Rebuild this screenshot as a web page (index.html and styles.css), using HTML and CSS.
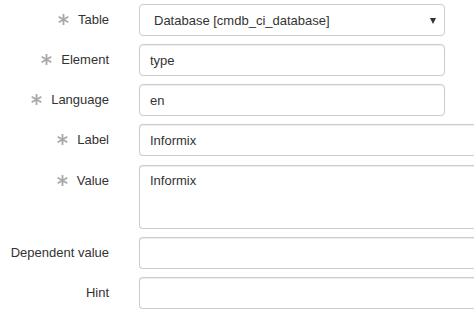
FILE: index.html
```html
<!DOCTYPE html>
<html lang="en">
<head>
    <meta charset="UTF-8">
    <meta name="viewport" content="width=device-width, initial-scale=1.0">
    <title>Choice</title>
    <link rel="stylesheet" href="styles.css">
</head>
<body>
    <form class="choice-form">
        <div class="form-row">
            <label class="form-label"><span class="required"><svg viewBox="0 0 14 14" width="13" height="13"><path d="M7 1v12M1.8 4l10.4 6M1.8 10l10.4-6"/></svg></span>Table</label>
            <div class="select-wrap short">
                <select class="form-control select-control">
                    <option>Database [cmdb_ci_database]</option>
                </select>
            </div>
        </div>

        <div class="form-row">
            <label class="form-label"><span class="required"><svg viewBox="0 0 14 14" width="13" height="13"><path d="M7 1v12M1.8 4l10.4 6M1.8 10l10.4-6"/></svg></span>Element</label>
            <input class="form-control short" type="text" value="type">
        </div>

        <div class="form-row">
            <label class="form-label"><span class="required"><svg viewBox="0 0 14 14" width="13" height="13"><path d="M7 1v12M1.8 4l10.4 6M1.8 10l10.4-6"/></svg></span>Language</label>
            <input class="form-control short" type="text" value="en">
        </div>

        <div class="form-row row-label">
            <label class="form-label"><span class="required"><svg viewBox="0 0 14 14" width="13" height="13"><path d="M7 1v12M1.8 4l10.4 6M1.8 10l10.4-6"/></svg></span>Label</label>
            <input class="form-control wide" type="text" value="Informix">
        </div>

        <div class="form-row">
            <label class="form-label"><span class="required"><svg viewBox="0 0 14 14" width="13" height="13"><path d="M7 1v12M1.8 4l10.4 6M1.8 10l10.4-6"/></svg></span>Value</label>
            <textarea class="form-control wide value-area">Informix</textarea>
        </div>

        <div class="form-row">
            <label class="form-label">Dependent value</label>
            <input class="form-control wide" type="text" value="">
        </div>

        <div class="form-row">
            <label class="form-label">Hint</label>
            <input class="form-control wide" type="text" value="">
        </div>
    </form>
</body>
</html>
```

FILE: styles.css
```css
* {
    margin: 0;
    padding: 0;
    box-sizing: border-box;
}

html, body {
    overflow: hidden;
}

body {
    font-family: 'Liberation Sans', Arial, sans-serif;
    font-size: 13px;
    color: #333;
    background: #fff;
}

.choice-form {
    padding-top: 4px;
}

.form-row {
    display: flex;
    align-items: flex-start;
    margin-bottom: 8px;
}

.row-label {
    margin-bottom: 9px;
}

.form-label {
    width: 139px;
    flex-shrink: 0;
    padding-right: 30px;
    padding-top: 8px;
    line-height: 16px;
    text-align: right;
    color: #333;
}

.required {
    display: inline-block;
    width: 13px;
    height: 13px;
    margin-right: 8px;
    vertical-align: -2px;
}

.required svg {
    display: block;
    stroke: #aaa;
    stroke-width: 2;
    fill: none;
}

.form-control {
    display: block;
    height: 32px;
    padding: 0 10px;
    font-family: 'Liberation Sans', Arial, sans-serif;
    font-size: 13px;
    color: #333;
    background: #fff;
    border: 1px solid #ccc;
    border-radius: 4px;
    box-shadow: inset 0 1px 1px rgba(0, 0, 0, 0.075);
    outline: none;
}

.short {
    width: 306px;
}

/* these run on past the right edge in the original, so no right border */
.wide {
    flex: 1;
    min-width: 0;
    border-right: none;
    border-radius: 4px 0 0 4px;
}

.value-area {
    height: 64px;
    padding-top: 7px;
    line-height: 16px;
    resize: none;
}

.select-wrap {
    position: relative;
}

.select-control {
    width: 100%;
    padding-left: 14px;
    appearance: none;
    -webkit-appearance: none;
    box-shadow: none;
}

.select-wrap::after {
    content: "";
    position: absolute;
    right: 9px;
    top: 14px;
    border-left: 3px solid transparent;
    border-right: 3px solid transparent;
    border-top: 6px solid #333;
    pointer-events: none;
}
```
